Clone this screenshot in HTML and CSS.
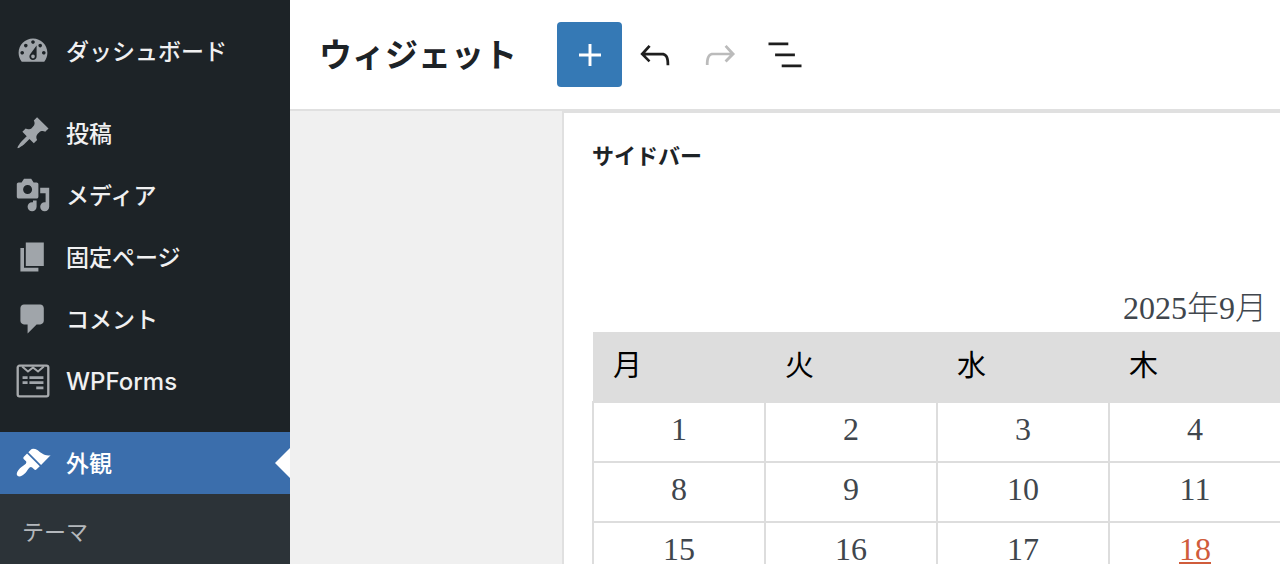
FILE: index.html
```html
<!DOCTYPE html>
<html lang="ja">

<head>
    <meta charset="UTF-8">
    <meta name="viewport" content="width=device-width, initial-scale=1.0">
    <title>ウィジェット</title>
    <link rel="stylesheet" href="styles.css">
</head>

<body>
    <nav class="admin-menu">
        <ul class="menu-list">
            <li>
                <a class="menu-item" href="#dashboard">
                    <svg class="menu-icon" viewBox="0 0 20 20" aria-hidden="true"><path d="M3.76 16h12.48c1.1-1.37 1.76-3.11 1.76-5 0-4.42-3.58-8-8-8s-8 3.58-8 8c0 1.89.66 3.63 1.76 5zM10 4c.55 0 1 .45 1 1s-.45 1-1 1-1-.45-1-1 .45-1 1-1zM6 6c.55 0 1 .45 1 1s-.45 1-1 1-1-.45-1-1 .45-1 1-1zm8 0c.55 0 1 .45 1 1s-.45 1-1 1-1-.45-1-1 .45-1 1-1zm-5.37 5.55L12 7v6c0 1.1-.9 2-2 2s-2-.9-2-2c0-.57.24-1.08.63-1.45zM4 10c.55 0 1 .45 1 1s-.45 1-1 1-1-.45-1-1 .45-1 1-1zm12 0c.55 0 1 .45 1 1s-.45 1-1 1-1-.45-1-1 .45-1 1-1zm-5 3c0-.55-.45-1-1-1s-1 .45-1 1 .45 1 1 1 1-.45 1-1z" fill-rule="evenodd"/></svg>
                    <span class="menu-label">ダッシュボード</span>
                </a>
            </li>
            <li class="separated">
                <a class="menu-item" href="#posts">
                    <svg class="menu-icon" viewBox="0 0 20 20" aria-hidden="true"><path d="M10.44 3.02l1.82-1.82 6.36 6.35-1.83 1.82c-1.05-.68-2.48-.57-3.41.36l-.75.75c-.92.93-1.04 2.35-.35 3.41l-1.83 1.82-2.41-2.41-2.8 2.79c-.42.42-3.38 2.71-3.8 2.29s1.86-3.39 2.28-3.81l2.79-2.79L4.1 9.36l1.83-1.82c1.05.69 2.48.57 3.4-.36l.75-.75c.93-.92 1.05-2.35.36-3.41z"/></svg>
                    <span class="menu-label">投稿</span>
                </a>
            </li>
            <li>
                <a class="menu-item" href="#media">
                    <svg class="menu-icon" viewBox="0 0 20 20" aria-hidden="true"><path d="M13 11V4c0-.55-.45-1-1-1h-1.67L9 1H5L3.67 3H2c-.55 0-1 .45-1 1v7c0 .55.45 1 1 1h10c.55 0 1-.45 1-1zM7 4.5c1.38 0 2.5 1.12 2.5 2.5S8.38 9.5 7 9.5 4.5 8.38 4.5 7 5.62 4.5 7 4.5zM14 6h5v10.5c0 1.38-1.12 2.5-2.5 2.5S14 17.88 14 16.5s1.12-2.5 2.5-2.5c.17 0 .34.02.5.05V9h-3V6zm-4 8.05V13h2v3.5c0 1.38-1.12 2.5-2.5 2.5S7 17.88 7 16.5 8.12 14 9.5 14c.17 0 .34.02.5.05z" fill-rule="evenodd"/></svg>
                    <span class="menu-label">メディア</span>
                </a>
            </li>
            <li>
                <a class="menu-item" href="#pages">
                    <svg class="menu-icon" viewBox="0 0 20 20" aria-hidden="true"><path d="M6 15V2h10v13H6zm-1 1h8v2H3V5h2v11z"/></svg>
                    <span class="menu-label">固定ページ</span>
                </a>
            </li>
            <li>
                <a class="menu-item" href="#comments">
                    <svg class="menu-icon" viewBox="0 0 20 20" aria-hidden="true"><path d="M5 2h9c1.1 0 2 .9 2 2v7c0 1.1-.9 2-2 2h-2l-5 5v-5H5c-1.1 0-2-.9-2-2V4c0-1.1.9-2 2-2z"/></svg>
                    <span class="menu-label">コメント</span>
                </a>
            </li>
            <li>
                <a class="menu-item" href="#wpforms">
                    <svg class="menu-icon" viewBox="0 0 20 20" aria-hidden="true">
                        <path d="M2.5 1.5h15a1 1 0 0 1 1 1v15a1 1 0 0 1-1 1h-15a1 1 0 0 1-1-1v-15a1 1 0 0 1 1-1z" fill="none" stroke="#a7aaad" stroke-width="1.3"/>
                        <path d="M4 2l3.2 2.7L10 2.5l2.8 2.2L16 2" fill="none" stroke="#a7aaad" stroke-width="1.1"/>
                        <path d="M4.2 7.4H7v1.5H4.2zM8 7.4h7.8v1.5H8zM4.2 10.2H7v1.5H4.2zM8 10.2h7.8v1.5H8zM11.8 13.1h4v1.5h-4z"/>
                    </svg>
                    <span class="menu-label latin">WPForms</span>
                </a>
            </li>
            <li class="separated">
                <a class="menu-item current" href="#appearance" aria-current="page">
                    <svg class="menu-icon" viewBox="0 0 20 20" aria-hidden="true"><path d="M14.48 11.06L7.41 3.99l1.5-1.5c.5-.56 2.3-.47 3.51.32 1.21.8 1.43 1.28 2.91 2.1 1.18.64 2.45 1.26 4.45.85zm-.71.71L6.7 4.7 4.93 6.47c-.39.39-.39 1.02 0 1.41l1.06 1.06c.39.39.39 1.03 0 1.42-.6.6-1.43 1.11-2.21 1.69-.35.26-.7.53-1.01.84C1.43 14.23.4 16.08 1.4 17.07c.99 1 2.84-.03 4.18-1.36.31-.31.58-.66.85-1.02.57-.78 1.08-1.61 1.69-2.21.39-.39 1.02-.39 1.41 0l1.06 1.06c.39.39 1.02.39 1.41 0z"/></svg>
                    <span class="menu-label">外観</span>
                </a>
                <ul class="submenu">
                    <li><a href="#themes">テーマ</a></li>
                </ul>
            </li>
        </ul>
    </nav>

    <main class="editor">
        <header class="editor-header">
            <h1>ウィジェット</h1>
            <div class="toolbar">
                <button type="button" class="tool primary" aria-label="ブロックを追加">
                    <svg viewBox="0 0 24 24" aria-hidden="true"><path d="M18 11.2h-5.2V6h-1.6v5.2H6v1.6h5.2V18h1.6v-5.2H18z"/></svg>
                </button>
                <button type="button" class="tool" aria-label="元に戻す">
                    <svg viewBox="0 0 24 24" aria-hidden="true"><path d="M18.3 11.7c-.6-.6-1.4-.9-2.3-.9H6.7l2.9-3.3-1.1-1-4.5 5L8.5 16l1-1-2.7-2.7H16c.5 0 .9.2 1.3.5 1 1 1 3.4 1 4.5v.3h1.5v-.2c0-1.5 0-4.3-1.5-5.7z"/></svg>
                </button>
                <button type="button" class="tool" aria-label="やり直す" disabled>
                    <svg viewBox="0 0 24 24" aria-hidden="true"><path d="M15.6 6.5l-1.1 1 2.9 3.3H8c-.9 0-1.7.3-2.3.9-1.4 1.5-1.4 4.2-1.4 5.6v.2h1.5v-.3c0-1.1 0-3.5 1-4.5.3-.3.7-.5 1.3-.5h9.2L14.5 15l1.1 1.1 4.6-4.6-4.6-5z"/></svg>
                </button>
                <button type="button" class="tool" aria-label="リスト表示">
                    <svg viewBox="0 0 24 24" aria-hidden="true"><path d="M13.8 5.2H3v1.5h10.8V5.2zm-3.6 12v1.5H21v-1.5H10.2zm7.2-6H6.6v1.5h10.8v-1.5z"/></svg>
                </button>
            </div>
        </header>

        <div class="workspace">
            <section class="widget-area">
                <h2>サイドバー</h2>
                <table class="calendar">
                    <caption>2025年9月</caption>
                    <thead>
                        <tr>
                            <th scope="col">月</th>
                            <th scope="col">火</th>
                            <th scope="col">水</th>
                            <th scope="col">木</th>
                            <th scope="col">金</th>
                            <th scope="col">土</th>
                            <th scope="col">日</th>
                        </tr>
                    </thead>
                    <tbody>
                        <tr><td>1</td><td>2</td><td>3</td><td>4</td><td>5</td><td>6</td><td>7</td></tr>
                        <tr><td>8</td><td>9</td><td>10</td><td>11</td><td>12</td><td>13</td><td>14</td></tr>
                        <tr><td>15</td><td>16</td><td>17</td><td><a href="#day-18">18</a></td><td>19</td><td>20</td><td>21</td></tr>
                    </tbody>
                </table>
            </section>
        </div>
    </main>
</body>

</html>
```
FILE: styles.css
```css
* {
    margin: 0;
    padding: 0;
    box-sizing: border-box;
}

body {
    display: flex;
    height: 100vh;
    overflow: hidden;
    font-family: Inter, "Noto Sans CJK JP", sans-serif;
    background: #f0f0f0;
    color: #1d2327;
}

/* admin menu */
.admin-menu {
    flex: 0 0 290px;
    padding-top: 20px;
    background: #1d2327;
    overflow: hidden;
}

.admin-menu ul {
    list-style: none;
}

.menu-list .separated {
    margin-top: 20px;
}

.menu-item {
    display: flex;
    align-items: center;
    gap: 15px;
    height: 62px;
    padding-left: 15px;
    color: #f0f0f1;
    font-size: 23px;
    font-weight: 500;
    text-decoration: none;
}

.menu-icon {
    width: 36px;
    height: 36px;
    fill: #a0a5aa;
}

.menu-label {
    padding-bottom: 2px;
}

.menu-label.latin {
    padding-bottom: 0;
    font-size: 24px;
}

.menu-item.current {
    background: #3b6eac;
    color: #fff;
}

.menu-item.current .menu-icon {
    fill: #fff;
}

.menu-item.current::after {
    content: "";
    margin-left: auto;
    border: 15px solid transparent;
    border-left: 0;
    border-right-color: #fff;
}

.submenu {
    padding: 8px 0;
    background: #2c3338;
}

.submenu a {
    display: block;
    padding: 0 22px;
    color: #b4b8bc;
    font-size: 22px;
    line-height: 60px;
    text-decoration: none;
}

/* editor */
.editor {
    flex: 1;
    min-width: 0;
    display: flex;
    flex-direction: column;
}

.editor-header {
    display: flex;
    flex-shrink: 0;
    align-items: center;
    gap: 40px;
    height: 111px;
    padding-left: 29px;
    background: #fff;
    border-bottom: 2px solid #e0e0e0;
}

.editor-header h1 {
    padding-bottom: 4px;
    font-size: 33px;
    font-weight: 700;
    white-space: nowrap;
}

.toolbar {
    display: flex;
}

.tool {
    display: flex;
    align-items: center;
    justify-content: center;
    width: 65px;
    height: 65px;
    border: 0;
    border-radius: 4px;
    background: none;
}

.tool svg {
    width: 44px;
    height: 44px;
    fill: #1e1e1e;
}

.tool:disabled svg {
    fill: #bbb;
}

.tool.primary {
    background: #3579b5;
}

.tool.primary svg {
    fill: #fff;
}

.workspace {
    flex: 1;
    min-height: 0;
    display: flex;
    align-items: flex-start;
    padding-left: 272px;
    overflow: hidden;
}

.widget-area {
    flex: 0 0 1266px;
    padding: 28px;
    background: #fff;
    border: 2px solid #e0e0e0;
}

.widget-area h2 {
    font-size: 22px;
    font-weight: 700;
    line-height: 30px;
    margin-bottom: 113px;
}

/* calendar */
.calendar {
    width: 100%;
    table-layout: fixed;
    border-collapse: collapse;
    font-family: "Liberation Serif", "Noto Sans CJK JP", serif;
    font-size: 32px;
    font-weight: 300;
    color: #40464d;
}

.calendar caption {
    line-height: 48px;
}

.calendar th {
    height: 70px;
    padding: 0 20px 8px;
    background: #ddd;
    color: #000;
    font-size: 29px;
    font-weight: 400;
    text-align: left;
}

.calendar td {
    height: 60px;
    padding-bottom: 6px;
    border: 2px solid #ddd;
    line-height: 48px;
    text-align: center;
}

.calendar a {
    color: #d05c3b;
}
```
